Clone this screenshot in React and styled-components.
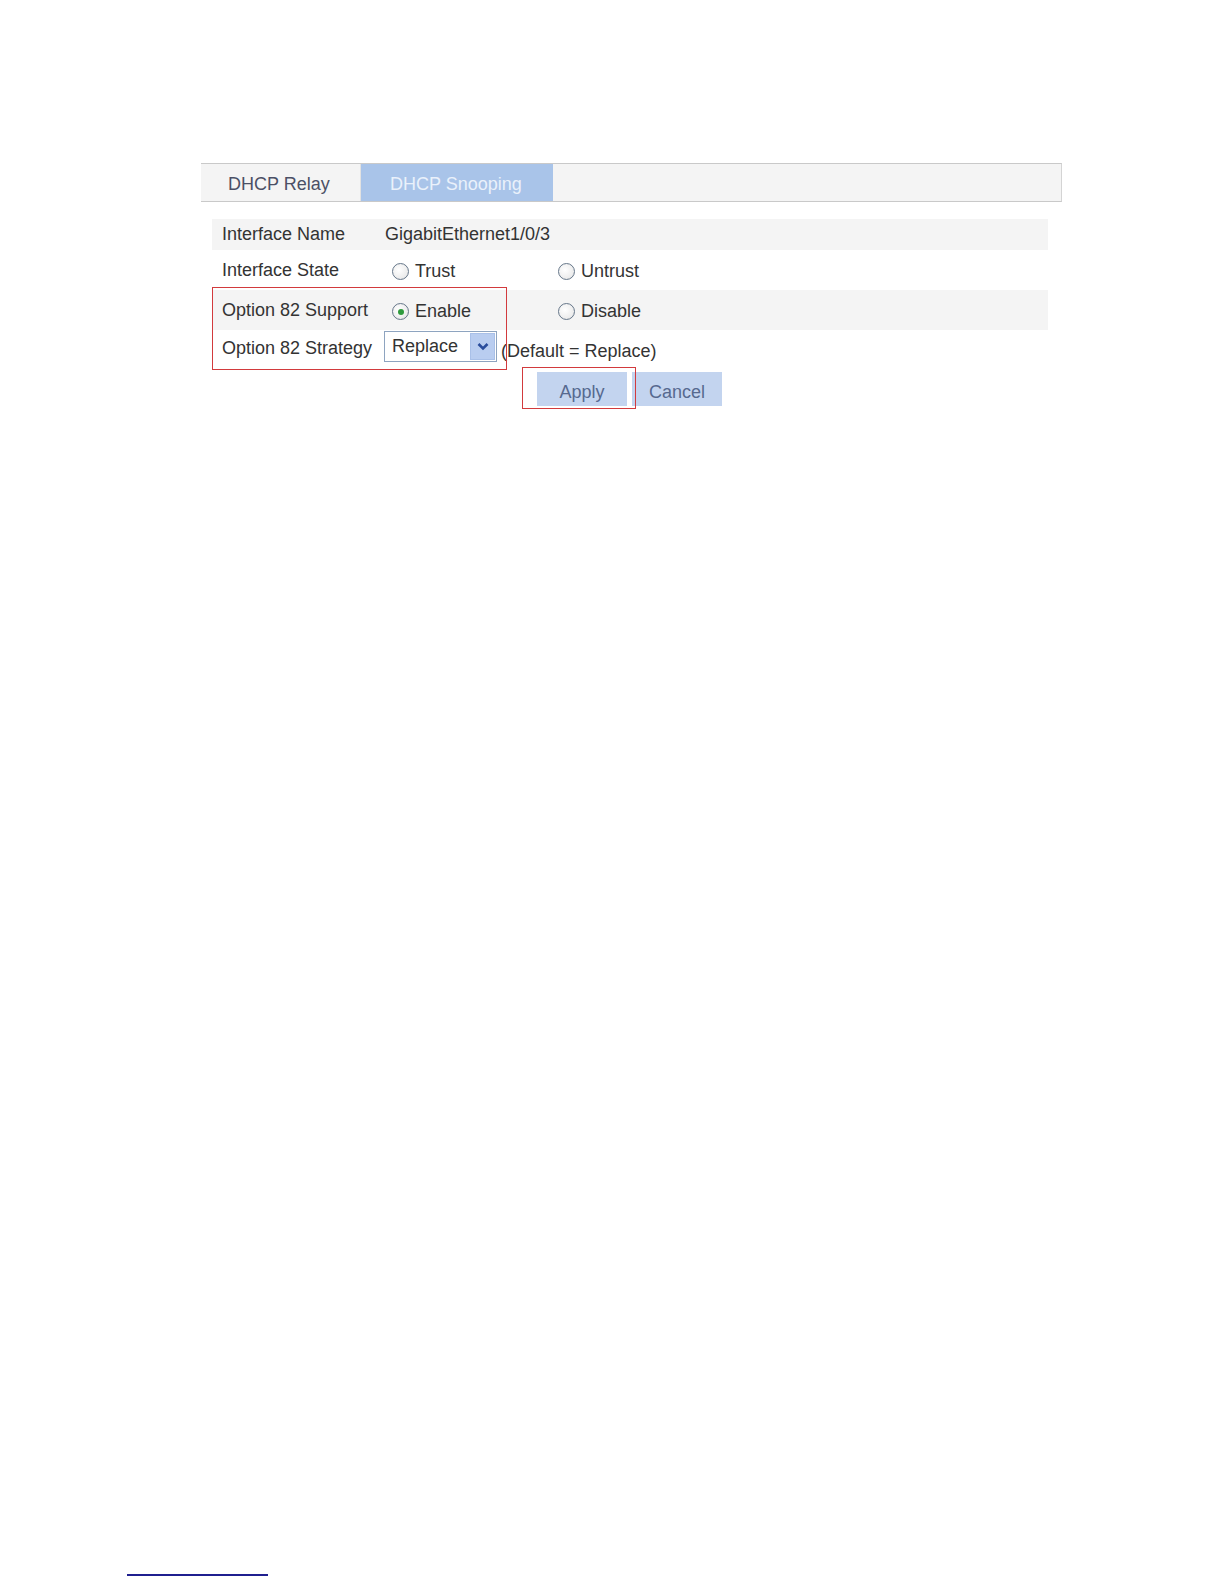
import React from 'react';
import styled, { createGlobalStyle } from 'styled-components';

const GlobalStyle = createGlobalStyle`
  html, body {
    margin: 0;
    padding: 0;
    background: #ffffff;
  }

  body {
    font-family: "Liberation Sans", Arial, sans-serif;
    color: #333333;
  }
`;

const Page = styled.div`
  min-height: 1584px;
  display: flex;
  flex-direction: column;
  box-sizing: border-box;
  padding-top: 163px;
`;

const Panel = styled.div`
  margin-left: 201px;
  width: 861px;
  position: relative;
`;

const TabBar = styled.div`
  display: flex;
  height: 37px;
  background: #f4f4f4;
  border-top: 1px solid #c9c9c9;
  border-bottom: 1px solid #c9c9c9;
  border-right: 1px solid #d4d4d4;
`;

const Tab = styled.div`
  width: ${(p) => p.width}px;
  display: flex;
  align-items: center;
  box-sizing: border-box;
  padding-left: ${(p) => (p.active ? 29 : 27)}px;
  padding-top: 4px;
  font-size: 18px;
  color: ${(p) => (p.active ? '#eaf1fb' : '#4b5066')};
  background: ${(p) => (p.active ? '#a9c4e9' : 'transparent')};
  border-right: ${(p) => (p.active ? 'none' : '1px solid #e2e2e2')};
`;

const Form = styled.div`
  margin: 17px 0 0 11px;
  width: 836px;
  position: relative;
`;

const Row = styled.div`
  display: flex;
  align-items: center;
  height: ${(p) => p.height}px;
  background: ${(p) => (p.shaded ? '#f4f4f4' : 'transparent')};
  font-size: 18px;
`;

const Label = styled.div`
  width: 173px;
  box-sizing: border-box;
  padding-left: 10px;
  margin-top: ${(p) => p.shift || 0}px;
  flex-shrink: 0;
`;

const Value = styled.div`
  display: flex;
  align-items: center;
  margin-top: ${(p) => p.shift || 0}px;
`;

const RadioOption = styled.label`
  display: flex;
  align-items: center;
  width: ${(p) => (p.width ? `${p.width}px` : 'auto')};
  padding-left: ${(p) => p.indent || 0}px;
  box-sizing: border-box;
`;

const RadioCircle = styled.span`
  width: 17px;
  height: 17px;
  border-radius: 50%;
  box-sizing: border-box;
  border: 1px solid #66778a;
  background: radial-gradient(circle at 40% 40%, #ffffff 0%, #ededed 65%, #d6d6d6 100%);
  display: flex;
  align-items: center;
  justify-content: center;
  margin-right: 6px;

  &::after {
    content: '';
    width: 6px;
    height: 6px;
    border-radius: 50%;
    background: ${(p) => (p.checked ? '#2e9a3c' : 'transparent')};
  }
`;

const Select = styled.div`
  width: 113px;
  height: 31px;
  box-sizing: border-box;
  border: 1px solid #8ea4c0;
  background: #ffffff;
  display: flex;
  align-items: center;
  justify-content: space-between;
  padding: 1px 1px 1px 7px;
  margin-left: -1px;
  margin-top: -7px;
`;

const SelectArrow = styled.span`
  width: 25px;
  height: 27px;
  background: #b9cdf0;
  border: 1px solid #a9c0e8;
  box-sizing: border-box;
  display: flex;
  align-items: center;
  justify-content: center;
`;

const Hint = styled.span`
  margin-left: 4px;
  margin-top: 3px;
`;

const Highlight = styled.div`
  position: absolute;
  border: 1.5px solid #d23a3d;
  pointer-events: none;
`;

const ButtonRow = styled.div`
  display: flex;
  gap: 5px;
  margin: 2px 0 0 336px;
  position: relative;
`;

const Button = styled.button`
  width: 90px;
  height: 34px;
  border: none;
  background: #c3d4ef;
  font-family: "Liberation Sans", Arial, sans-serif;
  font-size: 18px;
  color: #56698f;
  padding: 6px 0 0;
`;

const Footer = styled.div`
  margin-top: auto;
  margin-left: 127px;
  width: 141px;
  height: 2px;
  background: #1f1f8f;
  margin-bottom: 8px;
`;

const Radio = ({ checked, children, width, indent }) => (
  <RadioOption width={width} indent={indent}>
    <RadioCircle checked={checked} />
    {children}
  </RadioOption>
);

const App = () => (
  <Page>
    <GlobalStyle />
    <Panel>
      <TabBar>
        <Tab width={160}>DHCP Relay</Tab>
        <Tab width={192} active>DHCP Snooping</Tab>
      </TabBar>
      <Form>
        <Row shaded height={31}>
          <Label>Interface Name</Label>
          <Value>GigabitEthernet1/0/3</Value>
        </Row>
        <Row height={40}>
          <Label>Interface State</Label>
          <Value shift={3}>
            <Radio width={173} indent={7}>Trust</Radio>
            <Radio>Untrust</Radio>
          </Value>
        </Row>
        <Row shaded height={40}>
          <Label>Option 82 Support</Label>
          <Value shift={3}>
            <Radio checked width={173} indent={7}>Enable</Radio>
            <Radio>Disable</Radio>
          </Value>
        </Row>
        <Row height={40}>
          <Label shift={-4}>Option 82 Strategy</Label>
          <Value>
            <Select>
              Replace
              <SelectArrow>
                <svg width="12" height="9" viewBox="0 0 12 9">
                  <path d="M1.5 2 L6 6.5 L10.5 2" fill="none" stroke="#2a4d9c" strokeWidth="2.6" />
                </svg>
              </SelectArrow>
            </Select>
            <Hint>(Default = Replace)</Hint>
          </Value>
        </Row>
        <Highlight style={{ left: 0, top: 68, width: 293, height: 81 }} />
      </Form>
      <ButtonRow>
        <Button>Apply</Button>
        <Button>Cancel</Button>
        <Highlight style={{ left: -15, top: -5, width: 112, height: 40 }} />
      </ButtonRow>
    </Panel>
    <Footer />
  </Page>
);

export default App;
